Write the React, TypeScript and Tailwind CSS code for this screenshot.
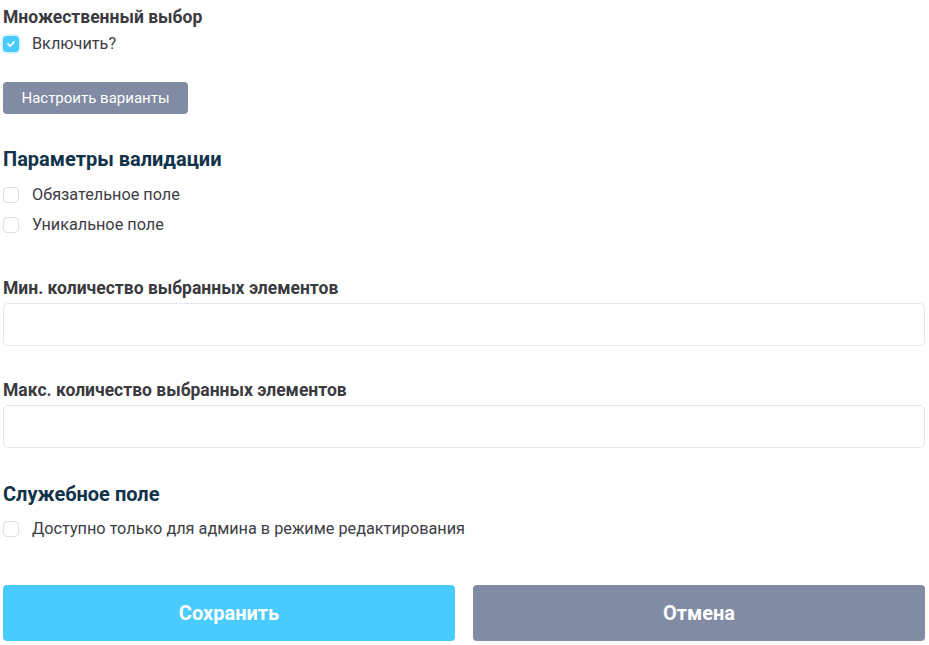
import React from "react";

function Check({ checked = false }: { checked?: boolean }) {
  if (checked) {
    return (
      <span className="flex h-4 w-4 shrink-0 items-center justify-center rounded-[4px] bg-[#4acbfd] shadow-[0_0_3px_1px_rgba(74,203,253,0.45)]">
        <svg width="10" height="10" viewBox="0 0 10 10" fill="none">
          <path d="M2 5.2L4.1 7.2L8 3" stroke="white" strokeWidth="1.8" strokeLinecap="round" strokeLinejoin="round" />
        </svg>
      </span>
    );
  }
  return <span className="block h-4 w-4 shrink-0 rounded-[4px] border border-[#dcdfe6] bg-white" />;
}

function CheckRow({ label, checked }: { label: string; checked?: boolean }) {
  return (
    <div className="flex h-[30px] items-center">
      <Check checked={checked} />
      <span className="ml-[13px] text-[16.25px] text-[#3d3d45]">{label}</span>
    </div>
  );
}

export default function App() {
  return (
    <div
      className="w-[929px] h-[645px] bg-white pl-[3px] pr-[4px]"
      style={{ fontFamily: "Roboto, 'Noto Sans', sans-serif" }}
    >
      <div className="pt-[5px] text-[17.5px] font-bold leading-[24px] text-[#3a3a3f]">Множественный выбор</div>
      <div className="mt-[0px]">
        <CheckRow label="Включить?" checked />
      </div>
      <button className="mt-[23px] flex h-[32px] w-[185px] items-center justify-center rounded-[4px] bg-[#818ba3] text-[15px] text-white">
        Настроить варианты
      </button>

      <div className="mt-[33px] text-[20px] font-bold leading-[24px] text-[#10324a]">Параметры валидации</div>
      <div className="mt-[9px]">
        <CheckRow label="Обязательное поле" />
        <CheckRow label="Уникальное поле" />
      </div>

      <div className="mt-[36px] text-[17.5px] font-bold leading-[24px] text-[#3a3a3f]">Мин. количество выбранных элементов</div>
      <div className="mt-[3px] h-[43px] w-full rounded-[5px] border border-[#e4e7ed] bg-white" />

      <div className="mt-[32px] text-[17.5px] font-bold leading-[24px] text-[#3a3a3f]">Макс. количество выбранных элементов</div>
      <div className="mt-[3px] h-[43px] w-full rounded-[5px] border border-[#e4e7ed] bg-white" />

      <div className="mt-[34px] text-[20px] font-bold leading-[24px] text-[#10324a]">Служебное поле</div>
      <div className="mt-[8px]">
        <CheckRow label="Доступно только для админа в режиме редактирования" />
      </div>

      <div className="mt-[41px] flex gap-[18px]">
        <button className="flex h-[56px] flex-1 items-center justify-center rounded-[4px] bg-[#4acbfd] text-[20px] font-bold text-white">
          Сохранить
        </button>
        <button className="flex h-[56px] flex-1 items-center justify-center rounded-[4px] bg-[#818ba3] text-[20px] font-bold text-white">
          Отмена
        </button>
      </div>
    </div>
  );
}
